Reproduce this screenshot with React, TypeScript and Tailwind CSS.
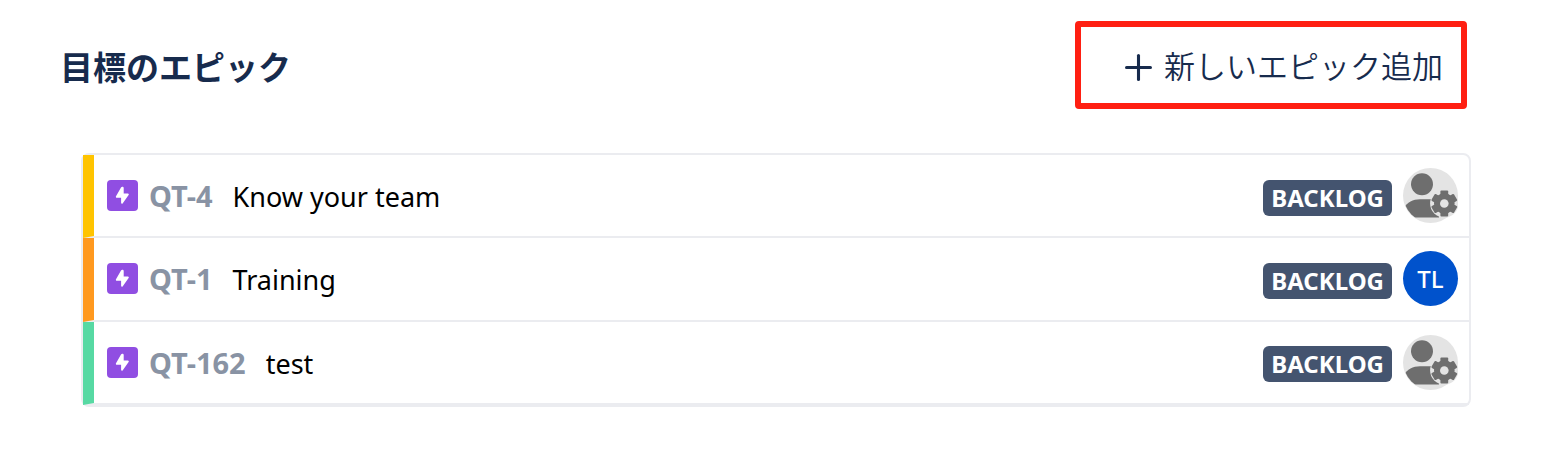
import { Plus } from "lucide-react";
import clsx from "clsx";

interface Epic {
  key: string;
  title: string;
  status: string;
  accent: string;
  assignee?: string;
}

const epics: Epic[] = [
  {
    key: "QT-4",
    title: "Know your team",
    status: "BACKLOG",
    accent: "border-l-[#ffc400]",
  },
  {
    key: "QT-1",
    title: "Training",
    status: "BACKLOG",
    accent: "border-l-[#ff991f]",
    assignee: "TL",
  },
  {
    key: "QT-162",
    title: "test",
    status: "BACKLOG",
    accent: "border-l-[#57d9a3]",
  },
];

function EpicIcon() {
  return (
    <svg viewBox="0 0 31 31" className="size-[31px] shrink-0" aria-hidden="true">
      <rect width="31" height="31" rx="4" fill="#904ee2" />
      <path
        d="M14 7.4 9 16.2c-.4.8 0 1.6.8 1.6h4.3v5c0 1.1 1.1 1.4 1.7.5l5.8-8.3c.5-.8.1-1.6-.7-1.6h-4.2V7.8c0-1.3-2-1.6-2.7-.4Z"
        fill="#fff"
      />
    </svg>
  );
}

// Person with a gear, for epics that nobody has taken yet
function UnassignedAvatar() {
  return (
    <svg viewBox="0 0 55 55" className="size-[55px] shrink-0" role="img" aria-label="Unassigned">
      <defs>
        <clipPath id="avatar-circle">
          <circle cx="27.5" cy="27.5" r="27" />
        </clipPath>
      </defs>
      <circle cx="27.5" cy="27.5" r="27.5" fill="#e4e4e4" />
      <circle cx="19" cy="16.3" r="11" fill="#6e6e6e" />
      <path
        d="M1 49.5V40C4 34.5 10 31.3 17 31.3h13l6 6v12.2Z"
        fill="#6e6e6e"
        clipPath="url(#avatar-circle)"
      />
      <circle cx="41.3" cy="35.5" r="14.2" fill="#e4e4e4" />
      <g fill="#6e6e6e">
        {[0, 60, 120].map((angle) => (
          <rect
            key={angle}
            x="37.4"
            y="22.5"
            width="7.8"
            height="26"
            rx="1"
            transform={`rotate(${angle} 41.3 35.5)`}
          />
        ))}
        <circle cx="41.3" cy="35.5" r="10.3" />
      </g>
      <circle cx="41.3" cy="35.5" r="4.3" fill="#e4e4e4" />
    </svg>
  );
}

function EpicRow({ epic }: { epic: Epic }) {
  return (
    <li
      className={clsx(
        "flex items-center border-b-2 border-l-[11px] border-b-[#ebecf0] pr-[11px] pl-[13px]",
        epic.accent
      )}
    >
      <EpicIcon />
      <div className="ml-[11px] flex flex-1 items-baseline gap-5">
        <span className="text-[29px] font-bold text-[#8993a4]">{epic.key}</span>
        <span className="text-[27px] text-black">{epic.title}</span>
      </div>
      <span className="mt-1 mr-[11px] rounded-md bg-[#44546f] px-2 text-[24px] leading-[36px] font-bold text-white">
        {epic.status}
      </span>
      {epic.assignee ? (
        <span className="flex size-[55px] items-center justify-center rounded-full bg-[#0052cc] text-[24px] font-medium text-white">
          {epic.assignee}
        </span>
      ) : (
        <UnassignedAvatar />
      )}
    </li>
  );
}

export default function App() {
  return (
    <div className="min-h-screen bg-white pt-[21px] pr-[90px] pb-14 pl-[60px] font-['Noto_Sans','Noto_Sans_CJK_JP',sans-serif]">
      <header className="mr-1 flex items-center justify-between text-[#172b4d]">
        <h2 className="pt-1 font-['Noto_Sans_CJK_JP',sans-serif] text-[33px] font-bold">目標のエピック</h2>
        <button
          type="button"
          className="flex h-[88px] items-center gap-[5px] rounded border-[6px] border-[#ff1f12] pr-[18px] pl-[37px] font-['Noto_Sans_CJK_JP',sans-serif] text-[31px] font-[350]"
        >
          <Plus className="mt-1 size-[41px]" strokeWidth={1.8} />
          新しいエピック追加
        </button>
      </header>

      <ul className="mt-11 ml-[21px] grid min-h-[254px] auto-rows-fr rounded-lg border-2 border-[#ebecf0]">
        {epics.map((epic) => (
          <EpicRow key={epic.key} epic={epic} />
        ))}
      </ul>
    </div>
  );
}
